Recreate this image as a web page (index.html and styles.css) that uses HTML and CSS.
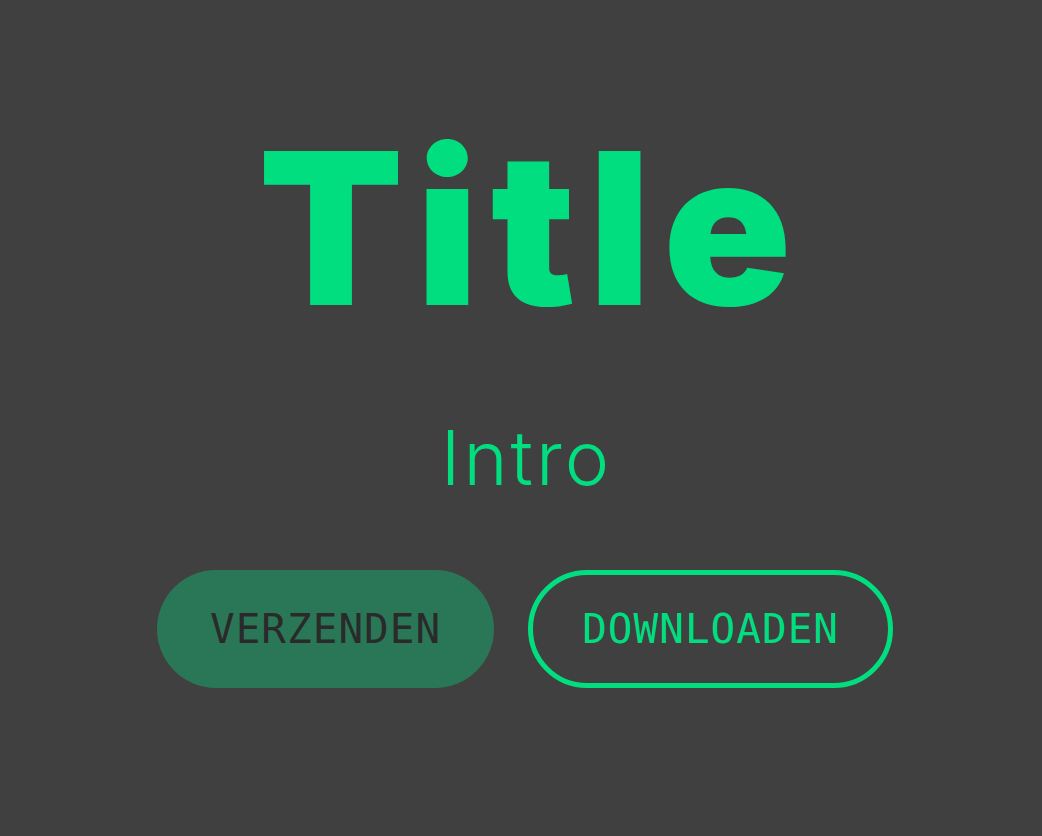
FILE: index.html
```html
<!DOCTYPE html>
<html lang="nl">
<head>
    <meta charset="UTF-8">
    <meta name="viewport" content="width=device-width, initial-scale=1.0">
    <title>Title</title>
    <link rel="stylesheet" href="styles.css">
</head>
<body>
    <div class="hero">
        <h1 class="hero-title">Title</h1>
        <p class="hero-intro">Intro</p>
        <div class="hero-actions">
            <button class="btn btn-filled">VERZENDEN</button>
            <button class="btn btn-outline">DOWNLOADEN</button>
        </div>
    </div>
</body>
</html>
```

FILE: styles.css
```css
body {
    background-color: #404040;
    color: #00de80;
    font-family: Inter, "Liberation Sans", sans-serif;
    margin: 0;
    height: 100vh;
}

.hero {
    display: flex;
    flex-direction: column;
    align-items: center;
    padding: 122px 0 0 8px;
}

.hero-title {
    font-size: 212px;
    font-weight: 900;
    line-height: 1;
    letter-spacing: 12px;
    margin: 0 0 0 12px;
}

.hero-intro {
    font-size: 75px;
    font-weight: 300;
    line-height: 1;
    letter-spacing: 3px;
    margin: 86px 0 75px 3px;
}

.hero-actions {
    display: flex;
    gap: 34px;
}

.btn {
    font-family: "DejaVu Sans Mono", monospace;
    font-size: 41px;
    letter-spacing: 1px;
    height: 118px;
    border-radius: 59px;
    cursor: pointer;
}

.btn-filled {
    background-color: #2a7757;
    color: #2a2a2a;
    border: none;
    padding: 0 53px;
}

.btn-outline {
    background-color: transparent;
    color: #00de80;
    border: 5px solid #00de80;
    padding: 0 49px;
}
```
